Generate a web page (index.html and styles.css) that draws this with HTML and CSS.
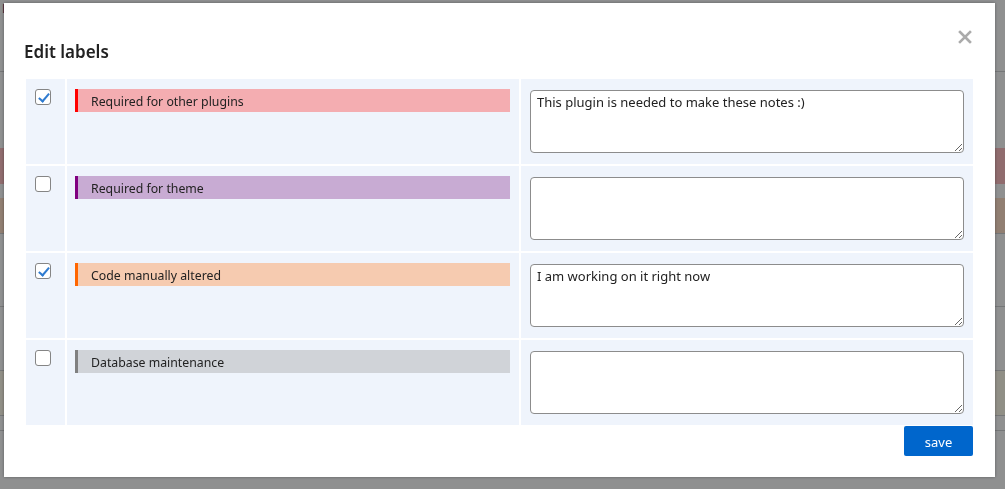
FILE: index.html
```html
<!DOCTYPE html>
<html lang="en">
<head>
<meta charset="utf-8">
<title>Edit labels</title>
<link rel="stylesheet" href="styles.css">
</head>
<body>
<div class="page">
  <div class="page-text">Lorem ipsum dolor sit amet consectetur adipiscing elit sed do eiusmod tempor incididunt ut labore et dolore magna aliqua</div>
  <div class="page-row r1"></div>
  <div class="page-row r2"></div>
  <div class="page-row red"></div>
  <div class="page-row orange"></div>
  <div class="page-row r3"></div>
  <div class="page-row r4"></div>
  <div class="page-row tan"></div>
  <div class="page-row r5"></div>
</div>
<div class="overlay"></div>
<div class="modal">
  <div class="modal-head">
    <h2 class="modal-title">Edit labels</h2>
    <button class="close" type="button" aria-label="Close">
      <svg width="14" height="14" viewBox="0 0 14 14"><path d="M2 2 L12 12 M12 2 L2 12" stroke="#ababab" stroke-width="2.6" stroke-linecap="square"/></svg>
    </button>
  </div>
  <table class="labels">
    <tr>
      <td class="c-check"><label class="cb"><input type="checkbox" checked><span class="box"></span></label></td>
      <td class="c-label"><div class="tag tag-red">Required for other plugins</div></td>
      <td class="c-note"><textarea>This plugin is needed to make these notes :)</textarea></td>
    </tr>
    <tr>
      <td class="c-check"><label class="cb"><input type="checkbox"><span class="box"></span></label></td>
      <td class="c-label"><div class="tag tag-purple">Required for theme</div></td>
      <td class="c-note"><textarea></textarea></td>
    </tr>
    <tr>
      <td class="c-check"><label class="cb"><input type="checkbox" checked><span class="box"></span></label></td>
      <td class="c-label"><div class="tag tag-orange">Code manually altered</div></td>
      <td class="c-note"><textarea>I am working on it right now</textarea></td>
    </tr>
    <tr>
      <td class="c-check"><label class="cb"><input type="checkbox"><span class="box"></span></label></td>
      <td class="c-label"><div class="tag tag-gray">Database maintenance</div></td>
      <td class="c-note"><textarea></textarea></td>
    </tr>
  </table>
  <div class="modal-foot">
    <button class="save" type="button">save</button>
  </div>
</div>
</body>
</html>
```
FILE: styles.css
```css
* { box-sizing: border-box; }
html, body { margin: 0; padding: 0; }
body {
  width: 1005px;
  height: 489px;
  overflow: hidden;
  background: #eef0f1;
  font-family: "Noto Sans", "Open Sans", sans-serif;
  color: #222;
}
.page { width: 1005px; overflow: hidden; }
.page-text {
  font-size: 13px;
  line-height: 16px;
  height: 16px;
  overflow: hidden;
  white-space: nowrap;
  color: #1d2c6a;
  padding-left: 2px;
}
.page-row { border-bottom: 1px solid #c4c6c8; }
.r1 { height: 56px; }
.r2 { height: 76px; border-bottom: none; }
.red { height: 36px; background: #f0b5b8; border-bottom: none; }
.orange { height: 36px; margin-top: 14px; background: #f2d4bf; }
.r3 { height: 73px; }
.r4 { height: 64px; }
.tan { height: 45px; background: #f1eee0; }
.r5 { height: 15px; }

.overlay {
  position: fixed;
  inset: 0;
  background: rgba(0, 0, 0, 0.4);
}
.modal {
  position: fixed;
  left: 4px;
  top: 3px;
  width: 991px;
  height: 474px;
  background: #fff;
  padding: 37px 20px 0 20px;
  box-shadow: 0 0 3px rgba(0,0,0,0.35);
}
.modal-head { position: relative; }
.modal-title {
  margin: 0;
  font-size: 17px;
  line-height: 24px;
  font-weight: 600;
  color: #222;
}
.close {
  position: absolute;
  right: 3px;
  top: -10px;
  width: 14px;
  height: 14px;
  padding: 0;
  border: 0;
  background: none;
  display: flex;
}
.labels {
  margin-top: 13px;
  border-collapse: separate;
  border-spacing: 2px;
  width: 951px;
  table-layout: fixed;
}
.labels td {
  background: #eff4fc;
  height: 85px;
  vertical-align: top;
  padding: 0;
}
.c-check { width: 39px; padding: 10px 0 0 9px !important; }
.c-label { width: 452px; padding: 10px 9px 0 8px !important; }
.c-note { width: 452px; padding: 11px 9px 0 9px !important; }

.cb { display: block; width: 16px; height: 16px; position: relative; }
.cb input { position: absolute; opacity: 0; margin: 0; width: 16px; height: 16px; }
.box {
  display: block;
  width: 16px;
  height: 16px;
  border: 1px solid #858585;
  border-radius: 3px;
  background: #fff;
  position: relative;
}
.cb input:checked + .box::after {
  content: "";
  position: absolute;
  left: 4.5px;
  top: 1px;
  width: 4px;
  height: 9px;
  border-right: 2.5px solid #2f7bd0;
  border-bottom: 2.5px solid #2f7bd0;
  transform: rotate(40deg);
}

.tag {
  height: 23px;
  line-height: 23px;
  padding-top: 1px;
  font-size: 12.3px;
  padding-left: 13px;
  border-left: 3px solid;
  white-space: nowrap;
  color: #222;
}
.tag-red { background: #f4adb1; border-color: #ff0000; }
.tag-purple { background: #c8abd3; border-color: #800080; }
.tag-orange { background: #f6cbb0; border-color: #ff6600; }
.tag-gray { background: #d0d3d8; border-color: #808080; }

textarea {
  display: block;
  width: 434px;
  height: 63px;
  border: 1px solid #8c8c8c;
  border-radius: 4px;
  background: #fff;
  font-family: "Noto Sans", "Open Sans", sans-serif;
  font-size: 13px;
  line-height: 17px;
  color: #222;
  padding: 3px 6px 2px;
  margin: 0;
  resize: vertical;
}
.modal-foot {
  display: flex;
  justify-content: flex-end;
  padding-right: 2px;
  margin-top: -1px;
}
.save {
  width: 69px;
  height: 30px;
  padding: 1px 0 0;
  background: #0066cc;
  color: #fff;
  border: 0;
  border-radius: 2px;
  font-family: "Noto Sans", "Open Sans", sans-serif;
  font-size: 13px;
}
```
